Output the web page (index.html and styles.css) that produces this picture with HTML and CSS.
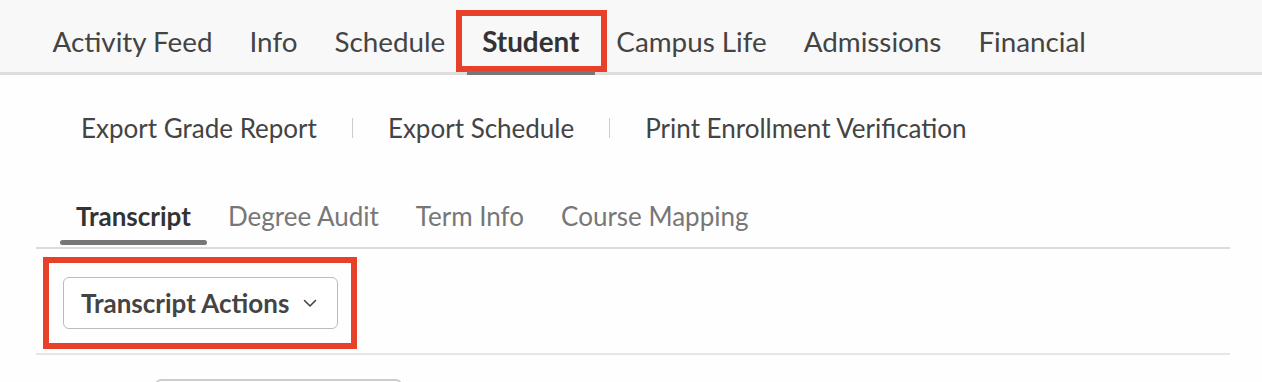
FILE: index.html
```html
<!DOCTYPE html>
<html>
<head>
<meta charset="utf-8">
<link rel="stylesheet" href="styles.css">
</head>
<body>
<nav class="topnav">
  <a class="nav-item">Activity Feed</a>
  <a class="nav-item">Info</a>
  <a class="nav-item">Schedule</a>
  <a class="nav-item active">Student<span class="annot annot-nav"></span></a>
  <a class="nav-item">Campus Life</a>
  <a class="nav-item">Admissions</a>
  <a class="nav-item">Financial</a>
</nav>
<div class="actions">
  <a class="action">Export Grade Report</a>
  <span class="sep"></span>
  <a class="action">Export Schedule</a>
  <span class="sep"></span>
  <a class="action">Print Enrollment Verification</a>
</div>
<div class="content">
  <div class="tabs">
    <a class="tab active">Transcript</a>
    <a class="tab">Degree Audit</a>
    <a class="tab">Term Info</a>
    <a class="tab">Course Mapping</a>
  </div>
  <div class="toolbar">
    <button class="btn">Transcript Actions
      <svg class="chev" width="14" height="9" viewBox="0 0 14 9"><path d="M1.5 1.5 L7 7 L12.5 1.5" fill="none" stroke="#444" stroke-width="1.6" stroke-linecap="round" stroke-linejoin="round"/></svg>
      <span class="annot annot-btn"></span>
    </button>
  </div>
  <div class="below">
    <div class="field"></div>
  </div>
</div>
</body>
</html>
```
FILE: styles.css
```css
html, body {
  margin: 0;
  padding: 0;
  background: #fefefe;
  font-family: Lato, "Open Sans", sans-serif;
  overflow: hidden;
}
.topnav {
  display: flex;
  height: 72px;
  background: #f8f8f8;
  border-bottom: 3px solid #dedede;
  padding-left: 34px;
}
.nav-item {
  position: relative;
  display: flex;
  align-items: center;
  padding: 10px 18.5px 0;
  font-size: 27.8px;
  color: #444;
  white-space: nowrap;
}
.nav-item.active {
  font-weight: 700;
  color: #333;
}
.nav-item.active::after {
  content: "";
  position: absolute;
  left: 3px;
  right: 3px;
  bottom: -3px;
  height: 4px;
  background: #777;
}
.annot {
  position: absolute;
  border: 6px solid #e8412a;
  box-sizing: border-box;
  pointer-events: none;
}
.annot-nav {
  left: -8px;
  right: -9px;
  top: 10px;
  bottom: 0;
}
.actions {
  display: flex;
  align-items: center;
  height: 105px;
  padding-left: 81px;
  font-size: 26px;
  color: #444;
}
.action {
  white-space: nowrap;
}
.sep {
  width: 1px;
  height: 20px;
  background: #ccc;
  margin: 0 35px;
}
.content {
  margin: 0 32px 0 36px;
}
.tabs {
  display: flex;
  gap: 5px;
  padding-left: 24px;
  border-bottom: 2px solid #dcdcdc;
}
.tab {
  position: relative;
  padding: 4px 16px 0;
  height: 63px;
  display: flex;
  align-items: center;
  font-size: 26px;
  color: #777;
}
.tab.active {
  font-weight: 700;
  color: #333;
}
.tab.active::after {
  content: "";
  position: absolute;
  left: 0;
  right: 0;
  bottom: 2px;
  height: 5px;
  border-radius: 3px;
  background: #777;
}
.toolbar {
  padding: 28px 0 24px 27px;
  border-bottom: 2px solid #e6e6e6;
}
.btn {
  position: relative;
  display: flex;
  align-items: center;
  gap: 14px;
  height: 52px;
  padding: 0 20px 0 17px;
  background: #fff;
  border: 1.5px solid #bbb;
  border-radius: 6px;
  font-family: Lato, "Open Sans", sans-serif;
  font-size: 26px;
  font-weight: 700;
  color: #444;
}
.chev {
  display: block;
}
.annot-btn {
  left: -21px;
  right: -20px;
  top: -21px;
  bottom: -21px;
}
.below {
  padding: 24px 0 0 119px;
}
.field {
  width: 243px;
  height: 40px;
  border: 2px solid #ccc;
  border-radius: 6px;
}
```
